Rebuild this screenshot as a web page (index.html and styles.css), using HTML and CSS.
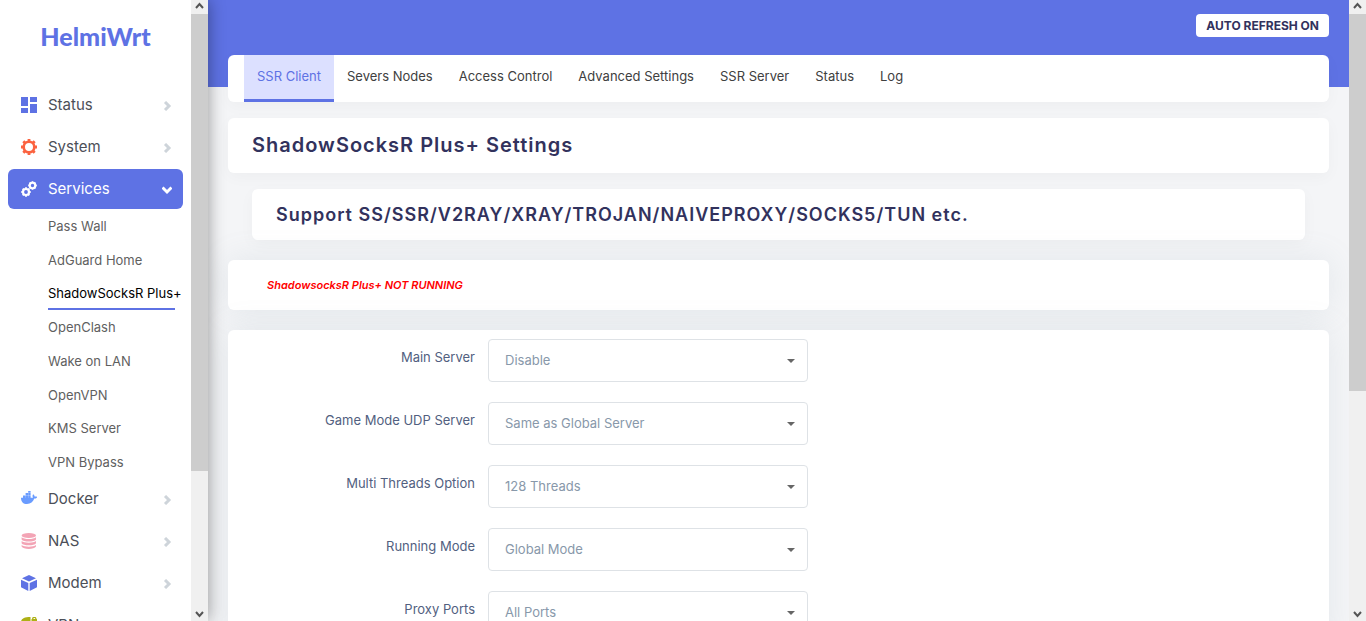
FILE: index.html
```html
<!DOCTYPE html>
<html lang="en">
<head>
<meta charset="utf-8">
<meta name="viewport" content="width=device-width, initial-scale=1">
<title>HelmiWrt - ShadowSocksR Plus+</title>
<link rel="stylesheet" href="styles.css">
</head>
<body>
<div class="app">
  <aside class="sidebar">
    <div class="sidebar-content">
      <a class="brand" href="#">HelmiWrt</a>
      <nav class="menu">
        <a class="menu-item" href="#">
          <svg class="icon" viewBox="0 0 16 16" fill="#5e72e4"><path d="M0 0h7v9H0zM9 0h7v5H9zM0 11h7v5H0zM9 7h7v9H9z"/></svg>
          <span class="menu-label">Status</span>
          <svg class="chevron" viewBox="0 0 10 10"><path d="M3 1l4 4-4 4"/></svg>
        </a>
        <a class="menu-item" href="#">
          <svg class="icon" viewBox="0 0 16 16" fill="none" stroke="#fb6340"><circle cx="8" cy="8" r="5.300" stroke-width="2.600"/><path d="M8 0v2.500M8 13.500V16M0 8h2.500M13.500 8H16M2.300 2.300l1.800 1.800M11.900 11.900l1.800 1.800M2.300 13.700l1.800-1.800M11.900 4.100l1.800-1.800" stroke-width="2.800"/></svg>
          <span class="menu-label">System</span>
          <svg class="chevron" viewBox="0 0 10 10"><path d="M3 1l4 4-4 4"/></svg>
        </a>
        <a class="menu-item menu-item-active" href="#">
          <svg class="icon" viewBox="0 0 16 16" fill="none" stroke="#fff"><circle cx="5" cy="11" r="3" stroke-width="2.200"/><path d="M5 6.300v1.500M5 14.200v1.500M.3 11h1.500M8.200 11h1.500M1.700 7.700l1.100 1.100M7.200 13.200l1.100 1.100M1.700 14.300l1.100-1.100M7.200 8.800l1.100-1.100" stroke-width="1.900"/><circle cx="11.500" cy="4.500" r="2.700" stroke-width="2"/><path d="M11.500.2v1.400M11.500 7.400v1.400M7.200 4.500h1.400M14.400 4.500h1.400M8.500 1.500l1 1M13.500 6.500l1 1M8.500 7.500l1-1M13.500 2.500l1-1" stroke-width="1.800"/></svg>
          <span class="menu-label">Services</span>
          <svg class="chevron" viewBox="0 0 10 10"><path d="M0.500 2.500l4.500 4.500 4.500-4.500"/></svg>
        </a>
        <div class="submenu">
          <a class="submenu-item" href="#">Pass Wall</a>
          <a class="submenu-item" href="#">AdGuard Home</a>
          <a class="submenu-item submenu-item-active" href="#">ShadowSocksR Plus+</a>
          <a class="submenu-item" href="#">OpenClash</a>
          <a class="submenu-item" href="#">Wake on LAN</a>
          <a class="submenu-item" href="#">OpenVPN</a>
          <a class="submenu-item" href="#">KMS Server</a>
          <a class="submenu-item" href="#">VPN Bypass</a>
        </div>
        <a class="menu-item" href="#">
          <svg class="icon" viewBox="0 0 16 16" fill="#6a9cff"><path d="M2 4.500h2.400v2.200H2zM4.600 4.500H7v2.200H4.600zM7.200 4.500h2.400v2.200H7.200zM4.600 2H7v2.200H4.600zM7.200 2h2.400v2.200H7.200zM7.200 0h2.400v1.700H7.200zM0 6.700h12c-.7-1.200-.6-2.400.2-3.400.9.600 1.300 1.300 1.400 2.200 1-.2 1.900-.1 2.700.4-.5 1.200-1.600 1.700-3 1.700C12 11 9.700 13 6 13 2.300 13 0 10.800 0 6.700z"/></svg>
          <span class="menu-label">Docker</span>
          <svg class="chevron" viewBox="0 0 10 10"><path d="M3 1l4 4-4 4"/></svg>
        </a>
        <a class="menu-item" href="#">
          <svg class="icon" viewBox="0 0 16 16" fill="#f3a4b5"><ellipse cx="7.800" cy="2.500" rx="7.200" ry="2.500"/><path d="M.6 4.200c2.400 2.400 12 2.400 14.400 0v2.200c-1.500 2.800-12.900 2.800-14.400 0zM.6 8.100c2.400 2.300 12 2.300 14.400 0v2.100c-1.500 2.800-12.900 2.800-14.400 0zM.6 11.900c2.400 2.300 12 2.300 14.400 0v1.600c-1.500 3.300-12.900 3.300-14.400 0z"/></svg>
          <span class="menu-label">NAS</span>
          <svg class="chevron" viewBox="0 0 10 10"><path d="M3 1l4 4-4 4"/></svg>
        </a>
        <a class="menu-item" href="#">
          <svg class="icon" viewBox="0 0 16 16" fill="#5e72e4"><path d="M8 0l7 3.300-7 3.200-7-3.200zM0 4.700l7.300 3.200V16L0 12.200zM16 4.700L8.700 7.900V16l7.300-3.800z"/></svg>
          <span class="menu-label">Modem</span>
          <svg class="chevron" viewBox="0 0 10 10"><path d="M3 1l4 4-4 4"/></svg>
        </a>
        <a class="menu-item" href="#">
          <svg class="icon" viewBox="0 0 16 16" fill="#adb015"><path d="M0 5c0-3 3-5 9.500-5v14H3c-2 0-3-4-3-9zM10.500 2h.5a2 2 0 0 1 4.500 0h.5v5h-5.500zM12.300 2h2a1 1 0 0 0-2 0z" fill-rule="evenodd"/></svg>
          <span class="menu-label">VPN</span>
          <svg class="chevron" viewBox="0 0 10 10"><path d="M3 1l4 4-4 4"/></svg>
        </a>
      </nav>
    </div>
    <div class="scrollbar" aria-hidden="true">
      <svg class="scroll-arrow" viewBox="0 0 17 14"><path d="M5 8l3.500-4L12 8"/></svg>
      <div class="scroll-track"><div class="scroll-thumb scroll-thumb-menu"></div></div>
      <svg class="scroll-arrow" viewBox="0 0 17 14"><path d="M5 5l3.500 4L12 5"/></svg>
    </div>
  </aside>

  <main class="main">
    <header class="topbar"><button class="refresh" type="button">AUTO REFRESH ON</button></header>
    <nav class="tabs card">
      <a class="tab tab-active" href="#">SSR Client</a>
      <a class="tab" href="#">Severs Nodes</a>
      <a class="tab" href="#">Access Control</a>
      <a class="tab" href="#">Advanced Settings</a>
      <a class="tab" href="#">SSR Server</a>
      <a class="tab" href="#">Status</a>
      <a class="tab" href="#">Log</a>
    </nav>
    <h1 class="title card">ShadowSocksR Plus+ Settings</h1>
    <h2 class="subtitle card">Support SS/SSR/V2RAY/XRAY/TROJAN/NAIVEPROXY/SOCKS5/TUN etc.</h2>
    <section class="state card card-glow"><em>ShadowsocksR Plus+ NOT RUNNING</em></section>
    <form class="settings card card-glow">
      <div class="field">
        <label class="field-label" for="main-server">Main Server</label>
        <div class="select"><select id="main-server" class="select-input"><option>Disable</option></select></div>
      </div>
      <div class="field">
        <label class="field-label" for="udp-server">Game Mode UDP Server</label>
        <div class="select"><select id="udp-server" class="select-input"><option>Same as Global Server</option></select></div>
      </div>
      <div class="field">
        <label class="field-label" for="threads">Multi Threads Option</label>
        <div class="select"><select id="threads" class="select-input"><option>128 Threads</option></select></div>
      </div>
      <div class="field">
        <label class="field-label" for="mode">Running Mode</label>
        <div class="select"><select id="mode" class="select-input"><option>Global Mode</option></select></div>
      </div>
      <div class="field">
        <label class="field-label" for="ports">Proxy Ports</label>
        <div class="select"><select id="ports" class="select-input"><option>All Ports</option></select></div>
      </div>
    </form>
  </main>

  <div class="scrollbar" aria-hidden="true">
    <svg class="scroll-arrow" viewBox="0 0 17 14"><path d="M5 8l3.500-4L12 8"/></svg>
    <div class="scroll-track"><div class="scroll-thumb scroll-thumb-page"></div></div>
    <svg class="scroll-arrow" viewBox="0 0 17 14"><path d="M5 5l3.500 4L12 5"/></svg>
  </div>
</div>
</body>
</html>
```

FILE: styles.css
```css
* {
  box-sizing: border-box;
}

body {
  margin: 0;
  font-family: Inter, "Open Sans", sans-serif;
  font-size: 14px;
  line-height: 20px;
  color: #32325d;
  background: #f4f5f7;
}

a {
  color: inherit;
  text-decoration: none;
}

.app {
  display: flex;
  height: 100vh;
  overflow: hidden;
}

/* Sidebar */
.sidebar {
  display: flex;
  flex: 0 0 208px;
  min-width: 0;
  background: #fff;
  box-shadow: 0 0 16px rgba(0, 0, 0, 0.4);
  z-index: 1;
}

.sidebar-content {
  flex: 1;
  min-width: 0;
  overflow: hidden;
}

.brand {
  display: block;
  padding: 21px 0 34px;
  text-align: center;
  font-family: Lato, sans-serif;
  font-size: 25px;
  font-weight: 900;
  line-height: 30px;
  color: #5e72e4;
}

.menu {
  display: flex;
  flex-direction: column;
  gap: 2px;
  padding: 0 8px;
}

.menu-item {
  display: flex;
  flex: none;
  align-items: center;
  height: 40px;
  padding: 0 11px 0 13px;
  border-radius: 6px;
  font-size: 15px;
  color: #4c4f58;
}

.menu-item-active {
  color: #fff;
  background: #5e72e4;
}

.icon {
  width: 16px;
  height: 16px;
  margin-right: 11px;
}

.menu-label {
  flex: 1;
}

.chevron {
  width: 10px;
  height: 10px;
  margin-top: 2px;
  fill: none;
  stroke: #ced4da;
  stroke-width: 3;
}

.menu-item-active .chevron {
  stroke: #fff;
}

.submenu {
  display: grid;
  height: 270px;
  grid-template-columns: minmax(0, 1fr);
  grid-auto-rows: 1fr;
  margin: -2px 8px -2px 40px;
}

.submenu-item {
  display: flex;
  align-items: center;
  font-size: 13px;
  white-space: nowrap;
  color: #5f5f5f;
}

.submenu-item-active {
  padding-top: 2px;
  color: #000;
  border-bottom: 2px solid #5e72e4;
}

/* Scrollbars */
.scrollbar {
  display: flex;
  flex: 0 0 17px;
  flex-direction: column;
  background: #f0f0f0;
}

.scroll-arrow {
  flex: none;
  width: 17px;
  height: 14px;
  fill: none;
  stroke: #555;
  stroke-width: 2;
}

.scroll-track {
  flex: 1;
}

.scroll-thumb {
  background: #cdcdcd;
}

.scroll-thumb-menu {
  height: 77%;
}

.scroll-thumb-page {
  height: 63.5%;
}

/* Page */
.main {
  flex: 1;
  min-width: 0;
  padding: 0 20px;
  overflow: hidden;
  background: linear-gradient(#5e72e4 87px, #f4f5f7 87px);
}

.card {
  margin: 0 0 16px;
  border-radius: 6px;
  background: #fff;
  box-shadow: 0 4px 16px rgba(0, 0, 0, 0.03);
}

.card-glow {
  margin-bottom: 20px;
  box-shadow: 0 0 32px rgba(136, 152, 170, 0.15);
}

.topbar {
  display: flex;
  justify-content: flex-end;
  padding: 14px 0 18px;
}

.refresh {
  height: 23px;
  padding: 0 10px;
  border: 0;
  border-radius: 4px;
  font: 700 12px/23px Inter, sans-serif;
  color: #32325d;
  background: #fff;
}

.tabs {
  display: flex;
  height: 47px;
  padding: 0 16px;
}

.tab {
  padding: 11px 13px 13px;
  font-size: 13px;
  color: #404040;
}

.tab-active {
  color: #5e72e4;
  background: #dce0ff;
  border-bottom: 3px solid #5e72e4;
}

.title {
  padding: 14px 24px;
  font-size: 20px;
  font-weight: 600;
  line-height: 27px;
  letter-spacing: 1px;
}

.subtitle {
  margin: 0 24px 20px;
  padding: 12px 24px;
  font-size: 18px;
  font-weight: 600;
  line-height: 27px;
  letter-spacing: 1px;
}

.state {
  padding: 15px 39px;
  font-size: 11px;
  font-weight: 600;
  color: #f00;
}

.settings {
  display: flex;
  flex-direction: column;
  gap: 20px;
  padding: 9px 0;
}

.field {
  display: flex;
  align-items: flex-start;
  gap: 13px;
}

.field-label {
  flex: 0 0 247px;
  padding-top: 8px;
  text-align: right;
  font-size: 13px;
  color: #525f7f;
}

.select {
  display: grid;
  flex: 0 1 320px;
  align-items: center;
}

.select::after {
  content: "";
  grid-area: 1 / 1;
  justify-self: end;
  margin-right: 13px;
  border: 4px solid transparent;
  border-top-color: #666;
  border-bottom: 0;
  pointer-events: none;
}

.select-input {
  grid-area: 1 / 1;
  width: 100%;
  height: 43px;
  padding: 0 16px 2px;
  appearance: none;
  border: 1px solid #dee2e6;
  border-radius: 4px;
  font: 13px/20px Inter, sans-serif;
  color: #8898aa;
  background: #fff;
}
```
